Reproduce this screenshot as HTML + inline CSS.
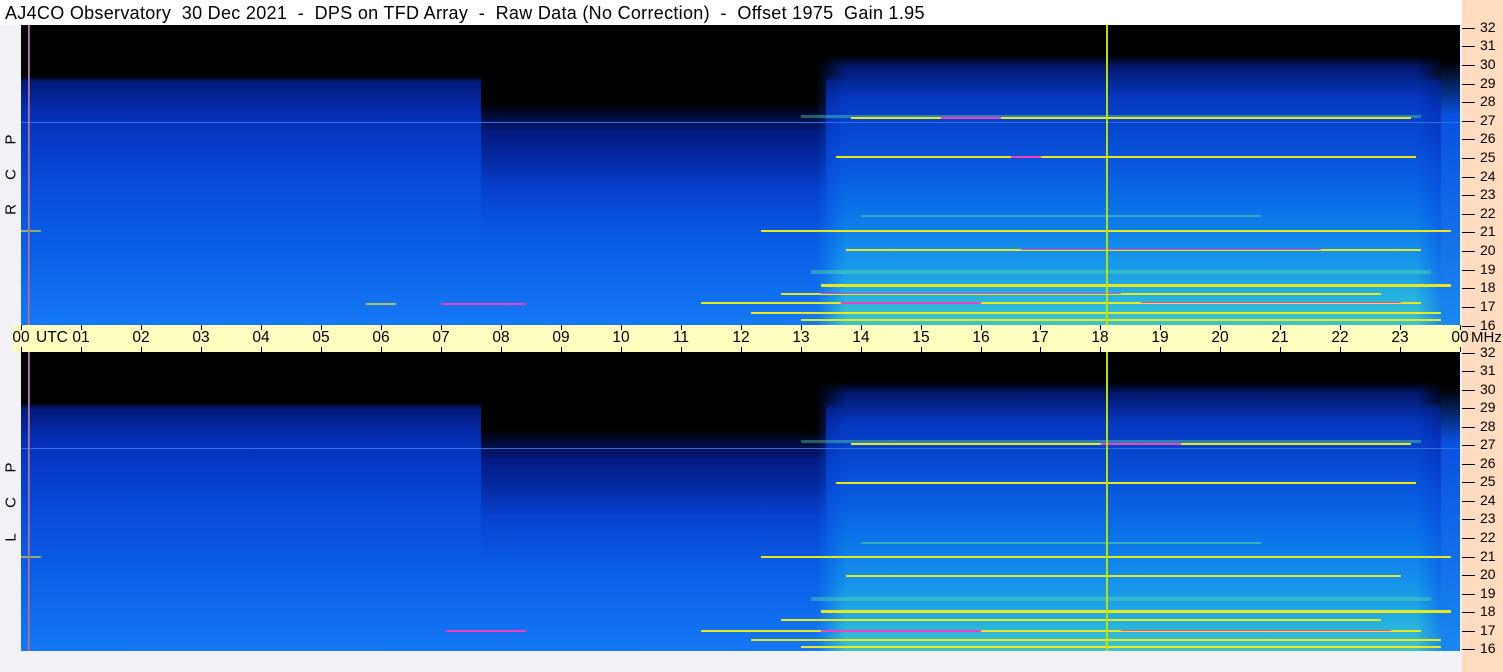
<!DOCTYPE html>
<html><head><meta charset="utf-8"><style>
*{margin:0;padding:0;box-sizing:border-box}
body{width:1503px;height:672px;overflow:hidden;background:#f2f2f6;font-family:"Liberation Sans",sans-serif;position:relative}
.title{position:absolute;left:0;top:0;width:1462px;height:25px;background:#fff;font-size:18px;letter-spacing:0.3px;line-height:26px;padding-left:5px;color:#000;white-space:pre}
.right{position:absolute;left:1462px;top:0;width:41px;height:672px;background:#ffdcc0}
.panel{position:absolute;left:21px;width:1439px;height:300px;overflow:hidden;
background:linear-gradient(to bottom,#000 0,#000 17%,#021a7a 19%,#0530b8 30%,#0748d8 50%,#0a60e8 75%,#1478f4 100%)}
.p1{top:25px}.p2{top:352px;height:299px}
.seg{position:absolute;top:0;height:100%}
.b{left:460px;width:345px;background:linear-gradient(to bottom,#000 0,#000 26%,rgba(3,22,120,.85) 36%,rgba(6,40,180,.3) 55%,transparent 70%)}
.c0{left:805px;width:615px;background:linear-gradient(to bottom,#000 0,#000 11%,transparent 12%)}
.c{left:795px;width:635px;background:linear-gradient(to bottom,#000 0,#000 10%,#031870 14%,#0638c0 24%,#0850d8 42%,#0a70e8 60%,#1490ec 76%,#24b0e0 90%,#40c4c8 100%);
-webkit-mask-image:linear-gradient(to right,transparent 0,#000 30px,#000 600px,transparent 100%);mask-image:linear-gradient(to right,transparent 0,#000 30px,#000 600px,transparent 100%)}
.e{left:1420px;width:19px;background:linear-gradient(to bottom,#000 0,#000 12%,#0a50e0 30%,#1a88f0 100%)}
.s{position:absolute;height:2px}
.y{background:#e8e820}.m{background:#f040c0}.g{background:#60e0a0}.k{background:#3070e8;height:1px}
.vl{position:absolute;top:0;height:100%;left:1085px;width:2px;background:#b8e000}
.vl2{position:absolute;top:0;height:100%;left:7px;width:2px;background:linear-gradient(to right,#ff8040,#4060ff)}
.axis{position:absolute;left:13px;top:325px;width:1449px;height:27px;background:#ffffc0}
.tk{position:absolute;width:1px;height:5px;background:#000}
.tl{position:absolute;top:4px;font-size:15.5px;line-height:18px;transform:translateX(-50%)}
.fr{position:absolute;left:1462px;font-size:14px;line-height:14px}
.fr i{display:inline-block;width:13px;height:1px;background:#000;vertical-align:middle;margin-right:5px}
.lab{position:absolute;left:3px;font-size:15px;width:16px;text-align:center;transform:rotate(-90deg)}
</style></head><body>
<div class="title">AJ4CO Observatory  30 Dec 2021  -  DPS on TFD Array  -  Raw Data (No Correction)  -  Offset 1975  Gain 1.95</div>
<div class="right"></div>

<div class="panel p1">
<div class="seg b"></div><div class="seg c0"></div><div class="seg c"></div><div class="seg e"></div>
<div class="s k" style="left:0;top:97px;width:1439px"></div>
<div class="s g" style="left:780px;top:90px;width:620px;height:3px;opacity:.4"></div>
<div class="s y" style="left:830px;top:92px;width:560px"></div>
<div class="s m" style="left:920px;top:92px;width:60px"></div>
<div class="s y" style="left:815px;top:131px;width:580px"></div>
<div class="s m" style="left:990px;top:131px;width:30px"></div>
<div class="s g" style="left:840px;top:190px;width:400px;opacity:.5"></div>
<div class="s y" style="left:740px;top:205px;width:690px"></div>
<div class="s y" style="left:825px;top:224px;width:575px"></div>
<div class="s m" style="left:1000px;top:224px;width:300px;height:1px"></div>
<div class="s g" style="left:790px;top:245px;width:620px;height:4px;opacity:.4"></div>
<div class="s y" style="left:800px;top:259px;width:630px;height:3px"></div>
<div class="s y" style="left:760px;top:268px;width:600px"></div>
<div class="s m" style="left:800px;top:268px;width:300px;height:1px"></div>
<div class="s y" style="left:680px;top:277px;width:720px"></div>
<div class="s m" style="left:820px;top:277px;width:140px"></div>
<div class="s m" style="left:1120px;top:277px;width:260px;height:1px"></div>
<div class="s y" style="left:730px;top:287px;width:690px"></div>
<div class="s y" style="left:780px;top:294px;width:640px"></div>
<div class="s m" style="left:420px;top:278px;width:85px"></div>
<div class="s y" style="left:345px;top:278px;width:30px;opacity:.7"></div>
<div class="s y" style="left:0;top:205px;width:20px;opacity:.6"></div>
<div class="vl"></div><div class="vl2"></div>
</div>

<div class="panel p2">
<div class="seg b"></div><div class="seg c0"></div><div class="seg c"></div><div class="seg e"></div>
<div class="s k" style="left:0;top:96px;width:1439px"></div>
<div class="s g" style="left:780px;top:88px;width:620px;height:3px;opacity:.4"></div>
<div class="s y" style="left:830px;top:91px;width:560px"></div>
<div class="s m" style="left:1080px;top:91px;width:80px"></div>
<div class="s y" style="left:815px;top:130px;width:580px"></div>
<div class="s g" style="left:840px;top:190px;width:400px;opacity:.5"></div>
<div class="s y" style="left:740px;top:204px;width:690px"></div>
<div class="s y" style="left:825px;top:223px;width:555px"></div>
<div class="s g" style="left:790px;top:245px;width:620px;height:4px;opacity:.4"></div>
<div class="s y" style="left:800px;top:258px;width:630px;height:3px"></div>
<div class="s y" style="left:760px;top:267px;width:600px"></div>
<div class="s y" style="left:680px;top:278px;width:720px"></div>
<div class="s m" style="left:800px;top:278px;width:160px"></div>
<div class="s m" style="left:1100px;top:278px;width:270px;height:1px"></div>
<div class="s y" style="left:730px;top:287px;width:690px"></div>
<div class="s y" style="left:780px;top:294px;width:640px"></div>
<div class="s m" style="left:425px;top:278px;width:80px"></div>
<div class="s y" style="left:0;top:204px;width:20px;opacity:.6"></div>
<div class="vl"></div><div class="vl2"></div>
</div>

<div class="axis">
<div class="tk" style="left:8px;top:0"></div><div class="tk" style="left:8px;bottom:0"></div><div class="tl" style="left:8px">00</div>
<div class="tl" style="left:23px;transform:none">UTC</div>
<div class="tk" style="left:68px;top:0"></div><div class="tk" style="left:68px;bottom:0"></div><div class="tl" style="left:68px">01</div>
<div class="tk" style="left:128px;top:0"></div><div class="tk" style="left:128px;bottom:0"></div><div class="tl" style="left:128px">02</div>
<div class="tk" style="left:188px;top:0"></div><div class="tk" style="left:188px;bottom:0"></div><div class="tl" style="left:188px">03</div>
<div class="tk" style="left:248px;top:0"></div><div class="tk" style="left:248px;bottom:0"></div><div class="tl" style="left:248px">04</div>
<div class="tk" style="left:308px;top:0"></div><div class="tk" style="left:308px;bottom:0"></div><div class="tl" style="left:308px">05</div>
<div class="tk" style="left:368px;top:0"></div><div class="tk" style="left:368px;bottom:0"></div><div class="tl" style="left:368px">06</div>
<div class="tk" style="left:428px;top:0"></div><div class="tk" style="left:428px;bottom:0"></div><div class="tl" style="left:428px">07</div>
<div class="tk" style="left:488px;top:0"></div><div class="tk" style="left:488px;bottom:0"></div><div class="tl" style="left:488px">08</div>
<div class="tk" style="left:548px;top:0"></div><div class="tk" style="left:548px;bottom:0"></div><div class="tl" style="left:548px">09</div>
<div class="tk" style="left:608px;top:0"></div><div class="tk" style="left:608px;bottom:0"></div><div class="tl" style="left:608px">10</div>
<div class="tk" style="left:668px;top:0"></div><div class="tk" style="left:668px;bottom:0"></div><div class="tl" style="left:668px">11</div>
<div class="tk" style="left:728px;top:0"></div><div class="tk" style="left:728px;bottom:0"></div><div class="tl" style="left:728px">12</div>
<div class="tk" style="left:788px;top:0"></div><div class="tk" style="left:788px;bottom:0"></div><div class="tl" style="left:788px">13</div>
<div class="tk" style="left:848px;top:0"></div><div class="tk" style="left:848px;bottom:0"></div><div class="tl" style="left:848px">14</div>
<div class="tk" style="left:908px;top:0"></div><div class="tk" style="left:908px;bottom:0"></div><div class="tl" style="left:908px">15</div>
<div class="tk" style="left:968px;top:0"></div><div class="tk" style="left:968px;bottom:0"></div><div class="tl" style="left:968px">16</div>
<div class="tk" style="left:1027px;top:0"></div><div class="tk" style="left:1027px;bottom:0"></div><div class="tl" style="left:1027px">17</div>
<div class="tk" style="left:1087px;top:0"></div><div class="tk" style="left:1087px;bottom:0"></div><div class="tl" style="left:1087px">18</div>
<div class="tk" style="left:1147px;top:0"></div><div class="tk" style="left:1147px;bottom:0"></div><div class="tl" style="left:1147px">19</div>
<div class="tk" style="left:1207px;top:0"></div><div class="tk" style="left:1207px;bottom:0"></div><div class="tl" style="left:1207px">20</div>
<div class="tk" style="left:1267px;top:0"></div><div class="tk" style="left:1267px;bottom:0"></div><div class="tl" style="left:1267px">21</div>
<div class="tk" style="left:1327px;top:0"></div><div class="tk" style="left:1327px;bottom:0"></div><div class="tl" style="left:1327px">22</div>
<div class="tk" style="left:1387px;top:0"></div><div class="tk" style="left:1387px;bottom:0"></div><div class="tl" style="left:1387px">23</div>
<div class="tk" style="left:1447px;top:0"></div><div class="tk" style="left:1447px;bottom:0"></div><div class="tl" style="left:1447px">00</div>
</div>
<div style="position:absolute;left:1471px;top:329px;font-size:15px;line-height:18px">MHz</div>

<div class="fr" style="top:20px"><i></i>32</div>
<div class="fr" style="top:38px"><i></i>31</div>
<div class="fr" style="top:57px"><i></i>30</div>
<div class="fr" style="top:76px"><i></i>29</div>
<div class="fr" style="top:94px"><i></i>28</div>
<div class="fr" style="top:113px"><i></i>27</div>
<div class="fr" style="top:131px"><i></i>26</div>
<div class="fr" style="top:150px"><i></i>25</div>
<div class="fr" style="top:169px"><i></i>24</div>
<div class="fr" style="top:187px"><i></i>23</div>
<div class="fr" style="top:206px"><i></i>22</div>
<div class="fr" style="top:224px"><i></i>21</div>
<div class="fr" style="top:243px"><i></i>20</div>
<div class="fr" style="top:262px"><i></i>19</div>
<div class="fr" style="top:280px"><i></i>18</div>
<div class="fr" style="top:299px"><i></i>17</div>
<div class="fr" style="top:318px"><i></i>16</div>

<div class="fr" style="top:345px"><i></i>32</div>
<div class="fr" style="top:363px"><i></i>31</div>
<div class="fr" style="top:382px"><i></i>30</div>
<div class="fr" style="top:400px"><i></i>29</div>
<div class="fr" style="top:419px"><i></i>28</div>
<div class="fr" style="top:437px"><i></i>27</div>
<div class="fr" style="top:456px"><i></i>26</div>
<div class="fr" style="top:474px"><i></i>25</div>
<div class="fr" style="top:493px"><i></i>24</div>
<div class="fr" style="top:511px"><i></i>23</div>
<div class="fr" style="top:530px"><i></i>22</div>
<div class="fr" style="top:549px"><i></i>21</div>
<div class="fr" style="top:567px"><i></i>20</div>
<div class="fr" style="top:586px"><i></i>19</div>
<div class="fr" style="top:604px"><i></i>18</div>
<div class="fr" style="top:623px"><i></i>17</div>
<div class="fr" style="top:641px"><i></i>16</div>

<div class="lab" style="top:131px">P</div>
<div class="lab" style="top:166px">C</div>
<div class="lab" style="top:201px">R</div>
<div class="lab" style="top:459px">P</div>
<div class="lab" style="top:494px">C</div>
<div class="lab" style="top:529px">L</div>
</body></html>
